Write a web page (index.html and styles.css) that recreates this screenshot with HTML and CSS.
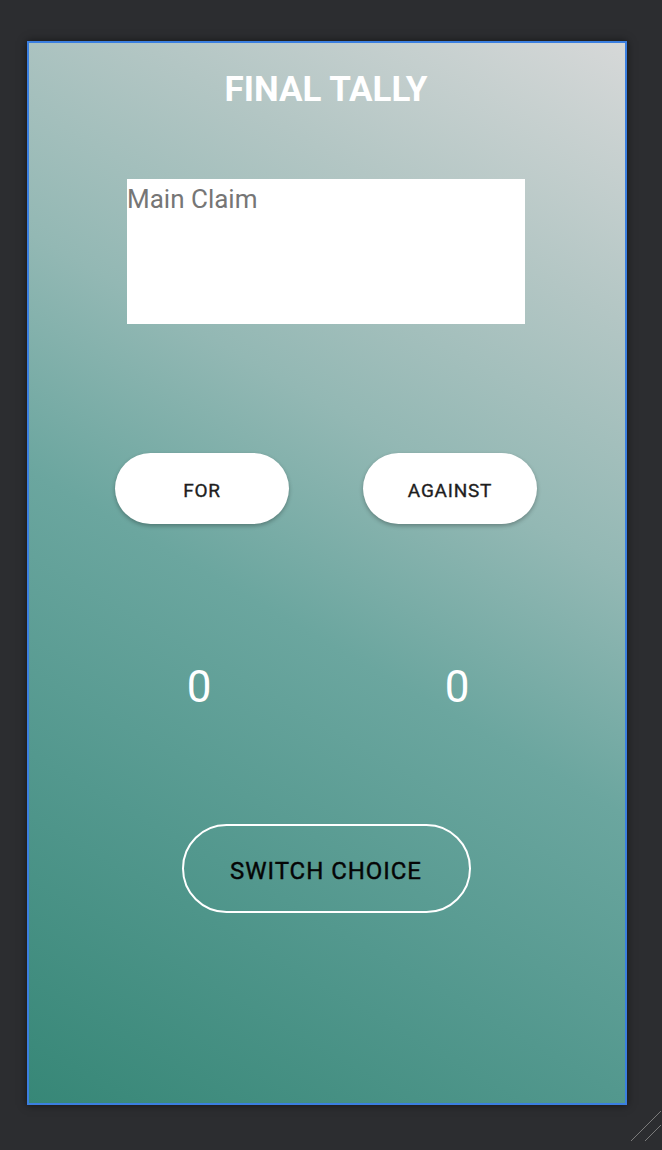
FILE: index.html
```html
<!DOCTYPE html>
<html>
<head>
<meta charset="utf-8">
<link rel="stylesheet" href="styles.css">
</head>
<body>
<div class="phone">
  <div class="screen">
    <h1 class="title">FINAL TALLY</h1>
    <div class="claim">Main Claim</div>
    <div class="vote-row">
      <button class="vote-btn">FOR</button>
      <button class="vote-btn">AGAINST</button>
    </div>
    <div class="count-row">
      <div class="count">0</div>
      <div class="count">0</div>
    </div>
    <button class="switch-btn">SWITCH CHOICE</button>
  </div>
</div>
<svg class="grip" width="32" height="34" viewBox="0 0 32 34">
  <line x1="1" y1="32" x2="31" y2="2" stroke="#7b7b7b" stroke-width="1"/>
  <line x1="15" y1="32" x2="31" y2="16" stroke="#7b7b7b" stroke-width="1"/>
</svg>
</body>
</html>
```
FILE: styles.css
```css
html, body {
  margin: 0;
  padding: 0;
}
body {
  background: #2c2d30;
  width: 662px;
  height: 1150px;
  overflow: hidden;
  padding: 41px 0 0 27px;
  box-sizing: border-box;
  font-family: Roboto, "Liberation Sans", sans-serif;
}
.phone {
  width: 600px;
  height: 1064px;
  box-sizing: border-box;
  border: 2px solid #3b7fe0;
  box-shadow: 0 0 8px rgba(0, 0, 0, 0.55);
}
.screen {
  height: 100%;
  box-sizing: border-box;
  padding-right: 2px;
  display: flex;
  flex-direction: column;
  align-items: center;
  background: linear-gradient(30deg, #378777 0%, #53988e 25%, #6ba69f 45%, #93b8b4 62%, #b3c6c4 80%, #d6d8d8 100%);
}
.title {
  margin: 26px 0 0;
  font-size: 35px;
  line-height: 41px;
  font-weight: 700;
  color: #ffffff;
}
.claim {
  margin-top: 69px;
  width: 398px;
  height: 145px;
  box-sizing: border-box;
  padding-top: 5px;
  background: #ffffff;
  color: #767676;
  font-size: 26px;
  line-height: 30px;
}
.vote-row {
  margin-top: 129px;
  display: flex;
  gap: 74px;
}
.vote-btn {
  width: 174px;
  height: 71px;
  border: none;
  border-radius: 36px;
  background: #ffffff;
  box-shadow: 0 2px 4px rgba(0, 0, 0, 0.28);
  font-family: Roboto, "Liberation Sans", sans-serif;
  font-size: 19px;
  font-weight: 400;
  letter-spacing: 0.04em;
  -webkit-text-stroke: 0.35px #1e1e1e;
  color: #1e1e1e;
  padding: 3px 0 0;
}
.count-row {
  margin-top: 137px;
  padding-left: 4px;
  display: flex;
  gap: 158px;
}
.count {
  width: 100px;
  text-align: center;
  font-size: 44px;
  line-height: 52px;
  color: #ffffff;
}
.switch-btn {
  margin-top: 111px;
  width: 289px;
  height: 89px;
  box-sizing: border-box;
  border: 2px solid #ffffff;
  border-radius: 45px;
  background: transparent;
  font-family: Roboto, "Liberation Sans", sans-serif;
  font-size: 24px;
  font-weight: 400;
  letter-spacing: 0.04em;
  -webkit-text-stroke: 0.4px #050505;
  color: #050505;
  padding: 4px 0 0;
}
.grip {
  position: fixed;
  right: 0;
  bottom: 7px;
}
```
